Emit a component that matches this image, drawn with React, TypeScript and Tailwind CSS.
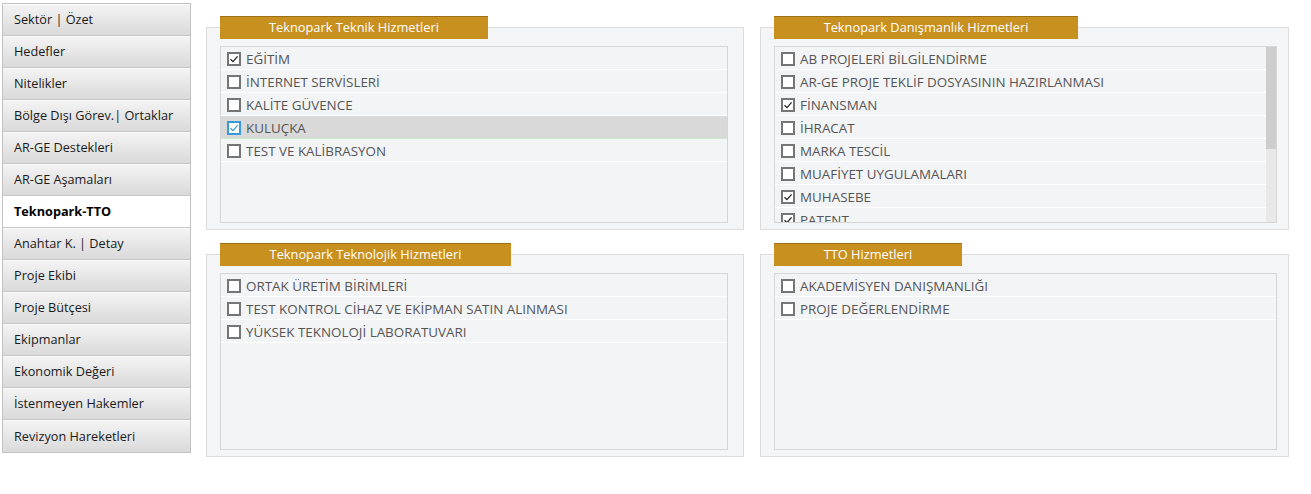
import { useState } from 'react';

const menu = [
  'Sektör | Özet',
  'Hedefler',
  'Nitelikler',
  'Bölge Dışı Görev.| Ortaklar',
  'AR-GE Destekleri',
  'AR-GE Aşamaları',
  'Teknopark-TTO',
  'Anahtar K. | Detay',
  'Proje Ekibi',
  'Proje Bütçesi',
  'Ekipmanlar',
  'Ekonomik Değeri',
  'İstenmeyen Hakemler',
  'Revizyon Hareketleri',
];

type Item = { label: string; checked?: boolean; active?: boolean };

const teknik: Item[] = [
  { label: 'EĞİTİM', checked: true },
  { label: 'İNTERNET SERVİSLERİ' },
  { label: 'KALİTE GÜVENCE' },
  { label: 'KULUÇKA', checked: true, active: true },
  { label: 'TEST VE KALİBRASYON' },
];

const danismanlik: Item[] = [
  { label: 'AB PROJELERİ BİLGİLENDİRME' },
  { label: 'AR-GE PROJE TEKLİF DOSYASININ HAZIRLANMASI' },
  { label: 'FİNANSMAN', checked: true },
  { label: 'İHRACAT' },
  { label: 'MARKA TESCİL' },
  { label: 'MUAFİYET UYGULAMALARI' },
  { label: 'MUHASEBE', checked: true },
  { label: 'PATENT', checked: true },
];

const teknolojik: Item[] = [
  { label: 'ORTAK ÜRETİM BİRİMLERİ' },
  { label: 'TEST KONTROL CİHAZ VE EKİPMAN SATIN ALINMASI' },
  { label: 'YÜKSEK TEKNOLOJİ LABORATUVARI' },
];

const tto: Item[] = [{ label: 'AKADEMİSYEN DANIŞMANLIĞI' }, { label: 'PROJE DEĞERLENDİRME' }];

function CheckBox({ checked, active }: { checked?: boolean; active?: boolean }) {
  return (
    <span
      className={`flex items-center justify-center w-[14px] h-[14px] shrink-0 bg-white border-2 ${
        active ? 'border-[#3a9ad9]' : 'border-[#757575]'
      }`}
    >
      {checked && (
        <svg viewBox="0 0 10 10" className="w-[10px] h-[10px]">
          <path
            d="M1.5 5.2 L4 7.6 L8.6 2.4"
            fill="none"
            stroke={active ? '#3a9ad9' : '#222'}
            strokeWidth="1.3"
          />
        </svg>
      )}
    </span>
  );
}

function Panel({
  title,
  tabW,
  items,
  scroll,
  right,
}: {
  title: string;
  tabW: string;
  items: Item[];
  scroll?: boolean;
  right?: boolean;
}) {
  return (
    <div className="flex flex-col">
      <div
        className={`relative z-10 ml-[14px] h-[23px] ${tabW} bg-[#c8901f] border-t border-[#9e7016] flex items-center justify-center text-white text-[12.8px]`}
      >
        {title}
      </div>
      <div
        className={`-mt-[12px] h-[203px] bg-[#f4f5f7] border border-[#dcdcdc] pt-[18px] pb-[6px] pl-[13px] ${
          right ? 'pr-[11px]' : 'pr-[15px]'
        }`}
      >
        <div className="flex h-[177px] bg-[#f3f4f6] border border-[#d6d6d6] overflow-hidden">
          <div className="flex-1 overflow-hidden">
            {items.map((it) => (
              <div
                key={it.label}
                className={`flex items-center gap-[5px] h-[23px] pl-[6px] pt-[2px] border-b ${
                  it.active ? 'bg-[#d9d9d9] border-[#cfe8cf]' : 'border-white'
                } text-[#555] text-[13.4px] whitespace-nowrap`}
              >
                <CheckBox checked={it.checked} active={it.active} />
                <span>{it.label}</span>
              </div>
            ))}
          </div>
          {scroll && (
            <div className="w-[10px] bg-[#e8e8e8] flex flex-col">
              <div className="h-[102px] bg-[#cdcdcd]" />
            </div>
          )}
        </div>
      </div>
    </div>
  );
}

export default function App() {
  const [sel, setSel] = useState(6);

  return (
    <div
      className="flex items-start w-[1311px] h-[494px] bg-white pl-[2px] pt-[3px]"
      style={{ fontFamily: '"Open Sans", "Noto Sans", sans-serif' }}
    >
      <div className="w-[189px] border border-[#c2c2c2] flex flex-col">
        {menu.map((m, i) => (
          <button
            key={m}
            onClick={() => setSel(i)}
            className={`h-[32px] text-left pl-[11px] text-[12.7px] border-b border-[#c6c6c6] last:border-b-0 ${
              sel === i
                ? 'bg-white font-bold text-black'
                : 'bg-gradient-to-b from-[#f3f3f3] to-[#dadada] text-[#1a1a1a] border-t border-t-[#fafafa]'
            }`}
          >
            {m}
          </button>
        ))}
      </div>

      <div className="ml-[15px] mt-[13px] grid grid-cols-[538px_529px] gap-x-[16px] gap-y-[13px]">
        <Panel title="Teknopark Teknik Hizmetleri" tabW="w-[268px]" items={teknik} />
        <Panel title="Teknopark Danışmanlık Hizmetleri" tabW="w-[304px]" items={danismanlik} scroll right />
        <Panel title="Teknopark Teknolojik Hizmetleri" tabW="w-[291px]" items={teknolojik} />
        <Panel title="TTO Hizmetleri" tabW="w-[188px]" items={tto} right />
      </div>
    </div>
  );
}
